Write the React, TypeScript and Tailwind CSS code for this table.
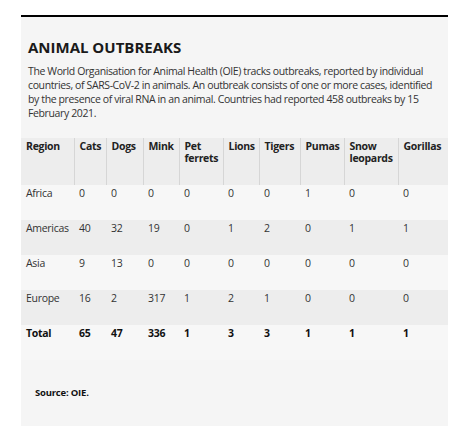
import React from "react";

const cols = [53, 32, 37, 36, 44, 36, 41, 44, 54, 50];
const headers = ["Region", "Cats", "Dogs", "Mink", "Pet ferrets", "Lions", "Tigers", "Pumas", "Snow leopards", "Gorillas"];
const rows: string[][] = [
  ["Africa", "0", "0", "0", "0", "0", "0", "1", "0", "0"],
  ["Americas", "40", "32", "19", "0", "1", "2", "0", "1", "1"],
  ["Asia", "9", "13", "0", "0", "0", "0", "0", "0", "0"],
  ["Europe", "16", "2", "317", "1", "2", "1", "0", "0", "0"],
];
const total = ["Total", "65", "47", "336", "1", "3", "3", "1", "1", "1"];

export default function App() {
  return (
    <div
      className="w-[456px] h-[426px] bg-white pl-[21px] pr-[8px] pt-[15px] overflow-hidden"
      style={{ fontFamily: '"Open Sans", "Noto Sans", sans-serif' }}
    >
      <div className="h-full border-t-2 border-black bg-[#f5f5f5] flex flex-col">
        <div className="px-[7px] pt-[20px]">
          <h1 className="text-[15px] leading-[20px] font-bold text-[#1a1a1a]">ANIMAL OUTBREAKS</h1>
          <p className="mt-[7px] text-[10.5px] leading-[14px] text-[#333] tracking-[-0.38px]">
            The World Organisation for Animal Health (OIE) tracks outbreaks, reported by individual countries, of SARS-CoV-2 in animals. An outbreak consists of one or more cases, identified by the presence of viral RNA in an animal. Countries had reported 458 outbreaks by 15 February 2021.
          </p>
        </div>
        <table className="mt-[18px] table-fixed border-collapse w-[427px] text-[10.5px] leading-[12px] text-[#222] tracking-[-0.3px]">
          <colgroup>
            {cols.map((w, i) => (
              <col key={i} style={{ width: w }} />
            ))}
          </colgroup>
          <thead>
            <tr className="bg-[#ededed] h-[47px]">
              {headers.map((h, i) => (
                <th
                  key={i}
                  className={`align-top text-left font-bold pl-[5px] pr-[2px] pt-[2px] ${i < headers.length - 1 ? "border-r border-[#d6d6d6]" : ""}`}
                >
                  {h}
                </th>
              ))}
            </tr>
          </thead>
          <tbody>
            {rows.map((r, ri) => (
              <tr key={ri} className={`h-[35px] ${ri % 2 === 1 ? "bg-[#ededed]" : "bg-[#f7f7f7]"}`}>
                {r.map((c, ci) => (
                  <td key={ci} className="align-top pl-[5px] pt-[2px] text-[#333]">
                    {c}
                  </td>
                ))}
              </tr>
            ))}
            <tr className="h-[35px] bg-[#f7f7f7]">
              {total.map((c, ci) => (
                <td key={ci} className="align-top pl-[5px] pt-[2px] font-bold text-[#111]">
                  {c}
                </td>
              ))}
            </tr>
          </tbody>
        </table>
        <div className="pl-[14px] pt-[26px] text-[9.5px] leading-[14px] font-bold text-[#111] tracking-[-0.2px]">
          Source: OIE.
        </div>
      </div>
    </div>
  );
}
